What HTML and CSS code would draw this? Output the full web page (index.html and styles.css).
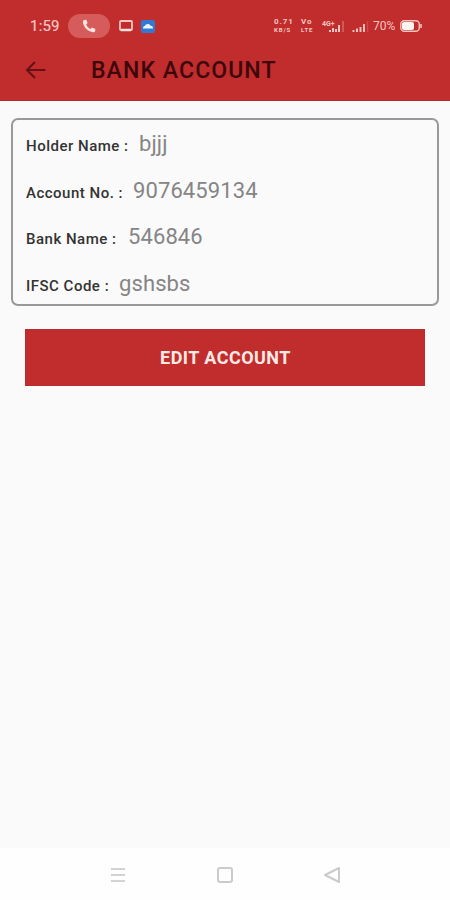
FILE: index.html
```html
<!DOCTYPE html>
<html lang="en">
<head>
<meta charset="utf-8">
<title>Bank Account</title>
<link rel="stylesheet" href="styles.css">
</head>
<body>
<header class="header">
  <div class="status">
    <span class="clock">1:59</span>
    <span class="call"><svg width="16" height="16" viewBox="0 0 16 16"><path d="M3.3 2 5.3 1.7 6.6 5 5.2 6.4C6 8.5 7.5 10 9.7 10.9L11.1 9.5 14.4 11 14.1 13.2C13.8 14.2 12.5 14.4 11.2 14 6.2 12.8 2.7 9 2 4.7 1.9 3.2 2.2 2.3 3.3 2Z" fill="#ffe3df"/></svg></span>
    <svg class="cast" width="14" height="12" viewBox="0 0 14 12"><rect x="1" y="1" width="12" height="9" rx="1" fill="none" stroke="#f8c6c0" stroke-width="1.8"/><path d="M2 10h10" stroke="#ffe3df" stroke-width="2.5"/></svg>
    <svg class="cloud" width="14" height="13" viewBox="0 0 14 13"><rect width="14" height="13" rx="2" fill="#3478d4"/><path d="M2 8.5C2 6.5 3.2 6 4 6 4.5 3.7 8.5 3.3 9.5 5.7 11.3 5.7 12 7 12 8.5Z" fill="#e9f5ff"/></svg>
    <div class="indicators">
      <span class="speed"><b>0.71</b><b class="unit">KB/S</b></span>
      <span class="volte"><b>Vo</b><b class="unit">LTE</b></span>
      <svg class="network" width="24" height="13" viewBox="0 0 24 13"><text x="0" y="5.5" class="tiny">4G+</text><path d="M8 12V10M11 12V8M14 12V9M17 12V5" stroke="#f8c6c0" stroke-width="2"/><path d="M21 12V1" stroke="#d9736c" stroke-width="1.3"/></svg>
      <svg class="signal" width="17" height="13" viewBox="0 0 17 13"><path d="M1.5 12V10M5 12V8.5M8.5 12V7M12 12V4" stroke="#f8c6c0" stroke-width="1.9"/><path d="M15.7 12V1" stroke="#cf5650"/></svg>
      <span class="percent">70%</span>
      <svg class="battery" width="23" height="12" viewBox="0 0 23 12"><rect x=".8" y=".8" width="18.5" height="10.4" rx="3.5" fill="none" stroke="#f8c6c0" stroke-width="1.4"/><rect x="2" y="2" width="12" height="8" rx="2" fill="#fff3f0"/><path d="M21 4v4" stroke="#f8c6c0" stroke-width="1.5"/></svg>
    </div>
  </div>
  <div class="toolbar">
    <svg class="back" width="22" height="20" viewBox="0 0 22 20"><path d="M20.5 9H2M10 1 2 9l8 8" fill="none" stroke="#641217" stroke-width="2"/></svg>
    <h1>BANK ACCOUNT</h1>
  </div>
</header>
<main>
  <section class="card">
    <div class="row"><span class="label holder">Holder Name :</span><span class="value name">bjjj</span></div>
    <div class="row"><span class="label account">Account No. :</span><span class="value">9076459134</span></div>
    <div class="row"><span class="label bank">Bank Name :</span><span class="value">546846</span></div>
    <div class="row"><span class="label code">IFSC Code :</span><span class="value ifsc">gshsbs</span></div>
  </section>
  <button class="edit">EDIT ACCOUNT</button>
</main>
<nav class="nav">
  <svg width="18" height="18" viewBox="0 0 18 18"><path d="M2 3h14M2 9h14M2 15h14" stroke="#d3d3d3" stroke-width="1.8"/></svg>
  <svg width="18" height="18" viewBox="0 0 18 18"><rect x="2" y="2" width="14" height="14" rx="2" fill="none" stroke="#cbcbcb" stroke-width="2"/></svg>
  <svg width="18" height="18" viewBox="0 0 18 18"><path d="M16 2v14L2 9Z" fill="none" stroke="#cbcbcb" stroke-width="2" stroke-linejoin="round"/></svg>
</nav>
</body>
</html>
```
FILE: styles.css
```css
* { box-sizing: border-box; }
body {
  margin: 0;
  height: 900px;
  display: flex;
  flex-direction: column;
  background: #fafafa;
  font-family: Roboto, "Liberation Sans", sans-serif;
  overflow: hidden;
}
svg { display: block; flex: none; }
.header { height: 101px; background: #c12c2c; border-bottom: 1px solid #b22a31; }
.status { height: 42px; padding: 10px 27px 0 30px; display: flex; align-items: center; color: #f8c6c0; }
.clock { width: 38px; font-size: 15px; letter-spacing: .2px; -webkit-text-stroke: .2px #f8c6c0; }
.call {
  width: 42px;
  height: 24px;
  display: flex;
  align-items: center;
  justify-content: center;
  border-radius: 12px;
  background: #d65b5b;
}
.cast { margin-left: 9px; }
.cloud { margin-left: 8px; }
.indicators { margin-left: auto; display: flex; align-items: center; }
.speed, .volte { display: flex; flex-direction: column; font-size: 8px; line-height: 8px; letter-spacing: .9px; }
.speed { width: 27px; }
.unit { font-size: 6px; line-height: 8px; }
.volte { width: 21px; }
.tiny { font: bold 7px Roboto, sans-serif; fill: #f8c6c0; }
.network { margin-right: 6px; }
.signal { margin-right: 4px; }
.percent { width: 27px; font-size: 12px; }
.toolbar { height: 58px; padding-left: 25px; display: flex; align-items: center; }
h1 { margin: 0 0 0 44px; font-size: 23px; font-weight: 500; letter-spacing: 1.1px; line-height: 30px; color: #3d080c; white-space: nowrap; }
main { flex: 1; padding: 17px 11px 0; }
.card { width: 428px; height: 188px; padding: 1px 13px; border: 2px solid #999; border-radius: 7px; }
.row { height: 46.6px; display: flex; align-items: baseline; line-height: 46px; white-space: nowrap; }
.label { font-size: 15px; font-weight: 500; letter-spacing: .5px; color: #333; }
.holder { width: 113px; }
.account { width: 107px; }
.bank { width: 102px; }
.code { width: 93px; }
.value { font-size: 22px; letter-spacing: .1px; color: #858585; }
.edit {
  display: block;
  width: 400px;
  height: 57px;
  margin: 23px 0 0 14px;
  padding: 0 0 0 1px;
  border: 1px solid #b72b31;
  background: #c12c2c;
  color: #ffe9e5;
  font: 700 18px Roboto, sans-serif;
  letter-spacing: .45px;
}
.nav { height: 52px; padding: 1px 109px 0; display: flex; align-items: center; justify-content: space-between; background: #fefefe; }
```
